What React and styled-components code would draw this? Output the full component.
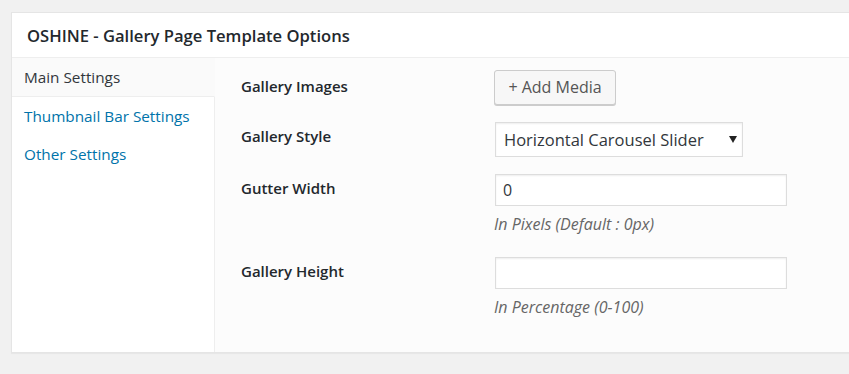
import React, { useState } from 'react';
import styled, { createGlobalStyle } from 'styled-components';

const GlobalStyle = createGlobalStyle`
  html, body {
    margin: 0;
    padding: 0;
    background: #f1f1f1;
    overflow: hidden;
  }
  body {
    font-family: 'Open Sans', 'Noto Sans', sans-serif;
    color: #23282d;
  }
`;

const Page = styled.div`
  padding: 12px 0 0 11px;
  height: 374px;
  box-sizing: border-box;
`;

const Panel = styled.div`
  width: 850px;
  background: #fff;
  border: 1px solid #e5e5e5;
  box-shadow: 0 1px 1px rgba(0, 0, 0, 0.04);
`;

const Header = styled.h2`
  margin: 0;
  height: 44px;
  display: flex;
  align-items: center;
  padding-left: 15px;
  font-size: 16.6px;
  font-weight: 600;
  color: #23282d;
  border-bottom: 1px solid #eee;
`;

const Body = styled.div`
  display: flex;
`;

const Sidebar = styled.ul`
  list-style: none;
  margin: 0;
  padding: 0;
  width: 203px;
  display: flex;
  flex-direction: column;
  background: #fff;
`;

const Tab = styled.li`
  height: 38px;
  display: flex;
  align-items: center;
  padding-left: 12px;
  font-size: 15.3px;
  color: ${(p) => (p.$active ? '#32373c' : '#0073aa')};
  background: ${(p) => (p.$active ? '#fafafa' : '#fff')};
  border-right: 1px solid ${(p) => (p.$active ? '#fafafa' : '#eee')};
  border-bottom: ${(p) => (p.$active ? '1px solid #eee' : 'none')};
  cursor: pointer;
`;

const Filler = styled.li`
  flex: 1;
  border-right: 1px solid #eee;
`;

const Content = styled.div`
  flex: 1;
  background: #fcfcfc;
  padding: 12px 0 35px 26px;
`;

const Row = styled.div`
  display: grid;
  grid-template-columns: 253px 1fr;
  align-items: start;
  margin-bottom: ${(p) => p.$gap ?? 17}px;
`;

const Label = styled.div`
  font-size: 15px;
  line-height: 20px;
  font-weight: 600;
  color: #23282d;
  padding-top: ${(p) => p.$top || 4}px;
`;

const Field = styled.div`
  display: flex;
  flex-direction: column;
  align-items: flex-start;
`;

const MediaButton = styled.button`
  height: 35px;
  width: 122px;
  padding: 0 0 2px;
  font-family: inherit;
  font-size: 16px;
  color: #555;
  background: #f7f7f7;
  border: 1px solid #ccc;
  border-radius: 3px;
  box-shadow: 0 1px 0 #ccc;
  cursor: pointer;
`;

const SelectWrap = styled.div`
  position: relative;
  margin-left: 1px;
`;

const Select = styled.select`
  appearance: none;
  display: block;
  width: 248px;
  height: 35px;
  padding: 0 0 0 8px;
  font-family: inherit;
  font-size: 16.5px;
  color: #32373c;
  background: #fff;
  border: 1px solid #ddd;
  box-shadow: inset 0 1px 2px rgba(0, 0, 0, 0.07);
  border-radius: 0;
  outline: none;
`;

const Arrow = styled.svg`
  position: absolute;
  right: 6px;
  top: 14px;
  pointer-events: none;
`;

const Input = styled.input`
  width: 292px;
  height: 32px;
  box-sizing: border-box;
  margin-left: 1px;
  padding: 0 7px;
  font-family: inherit;
  font-size: 16px;
  color: #32373c;
  background: #fff;
  border: 1px solid #ddd;
  box-shadow: inset 0 1px 2px rgba(0, 0, 0, 0.07);
  outline: none;
`;

const Hint = styled.p`
  margin: 8px 0 0;
  font-size: 16px;
  line-height: 20px;
  font-style: italic;
  color: #666;
`;

const tabs = ['Main Settings', 'Thumbnail Bar Settings', 'Other Settings'];

const App = () => {
  const [active, setActive] = useState(0);
  const [gutter, setGutter] = useState('0');
  const [height, setHeight] = useState('');

  return (
    <Page>
      <GlobalStyle />
      <Panel>
        <Header>OSHINE - Gallery Page Template Options</Header>
        <Body>
          <Sidebar>
            {tabs.map((t, i) => (
              <Tab key={t} $active={i === active} onClick={() => setActive(i)}>
                {t}
              </Tab>
            ))}
            <Filler />
          </Sidebar>
          <Content>
            <Row>
              <Label $top={6}>Gallery Images</Label>
              <Field>
                <MediaButton>+ Add Media</MediaButton>
              </Field>
            </Row>
            <Row>
              <Label>Gallery Style</Label>
              <Field>
                <SelectWrap>
                  <Select defaultValue="horizontal">
                    <option value="horizontal">Horizontal Carousel Slider</option>
                    <option value="vertical">Vertical Carousel Slider</option>
                  </Select>
                  <Arrow width="8" height="7" viewBox="0 0 8 7">
                    <path d="M0 0h8L4 7z" fill="#222" />
                  </Arrow>
                </SelectWrap>
              </Field>
            </Row>
            <Row $gap={23}>
              <Label>Gutter Width</Label>
              <Field>
                <Input value={gutter} onChange={(e) => setGutter(e.target.value)} />
                <Hint>In Pixels (Default : 0px)</Hint>
              </Field>
            </Row>
            <Row $gap={0}>
              <Label>Gallery Height</Label>
              <Field>
                <Input value={height} onChange={(e) => setHeight(e.target.value)} />
                <Hint>In Percentage (0-100)</Hint>
              </Field>
            </Row>
          </Content>
        </Body>
      </Panel>
    </Page>
  );
};

export default App;
